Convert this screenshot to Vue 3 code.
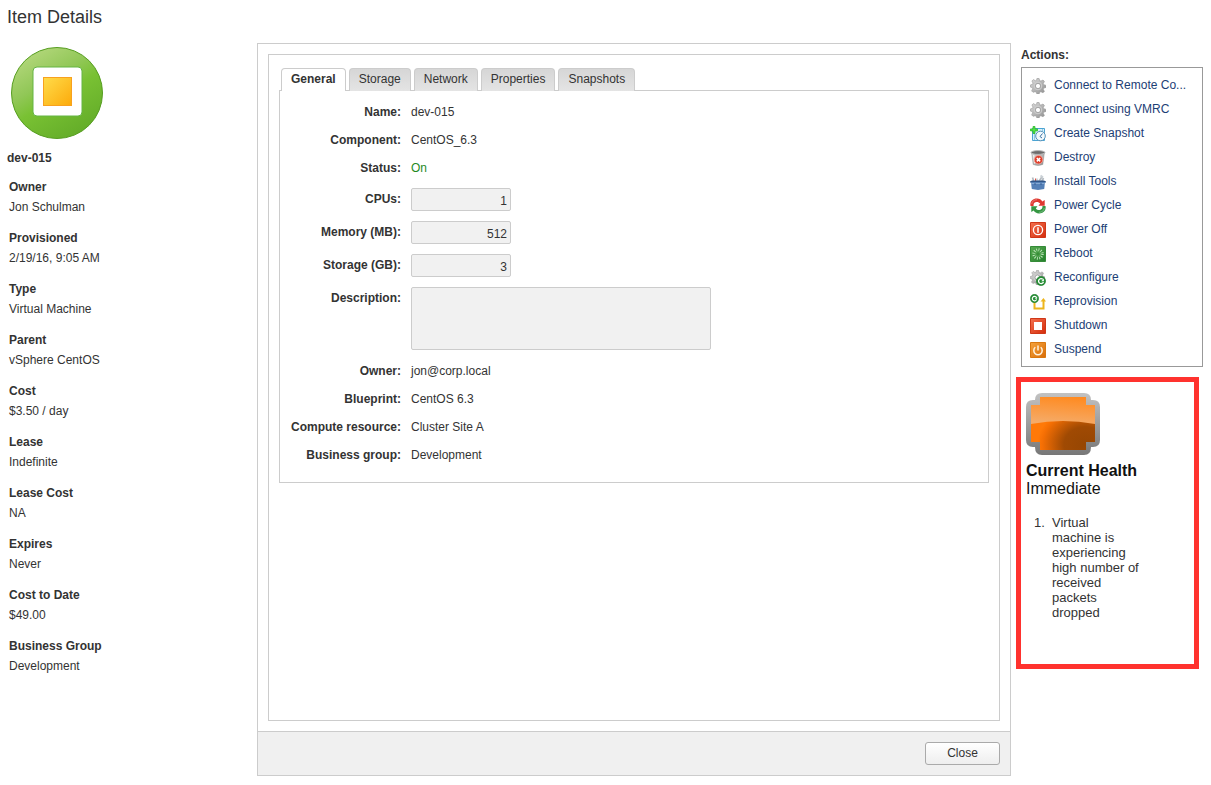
<template>
  <svg class="sprite" aria-hidden="true">
    <defs>
      <linearGradient id="steel" x1="0" y1="0" x2="1" y2="1">
        <stop offset="0" stop-color="#dedede" />
        <stop offset="1" stop-color="#8d8d8d" />
      </linearGradient>
      <linearGradient id="red" x1="0" y1="0" x2="1" y2="1">
        <stop offset="0" stop-color="#f4714f" />
        <stop offset="1" stop-color="#d42c0b" />
      </linearGradient>
      <linearGradient id="green" x1="0" y1="0" x2="1" y2="1">
        <stop offset="0" stop-color="#58aa50" />
        <stop offset="1" stop-color="#237f2c" />
      </linearGradient>
      <linearGradient id="amber" x1="0" y1="0" x2="1" y2="1">
        <stop offset="0" stop-color="#f5a33c" />
        <stop offset="1" stop-color="#d96c08" />
      </linearGradient>
    </defs>

    <symbol id="gear" viewBox="0 0 16 16">
      <path
        d="M7 .3h2l.7 2.3 1.2.5L13 2l1.4 1.4-1.1 2.1.5 1.2 2.2.7v2l-2.2.7-.5 1.2 1.1 2.1-1.4 1.4-2.1-1.1-1.2.5-.7 2.200H7l-.7-2.200-1.200-.5L3 14.300l-1.400-1.400 1.100-2.100-.5-1.200L.3 9V7l2.200-.7.5-1.200L1.900 3l1.400-1.400 2.100 1.100 1.200-.5z"
        fill="url(#steel)"
        stroke="#979797"
        stroke-width="0.6"
      />
      <circle cx="8" cy="8" r="3.8" fill="none" stroke="#cfcfcf" />
      <circle cx="8" cy="8" r="2.6" fill="#fff" stroke="#8d8d8d" stroke-width="0.7" />
    </symbol>

    <symbol id="snapshot" viewBox="0 0 16 16">
      <path d="M2.5 2.5h12v12h-12z" fill="#d9f0fb" stroke="#4ba4d3" />
      <path d="M4.5 3v11M12.5 3v3" stroke="#8fcbe9" />
      <circle cx="10.5" cy="10" r="4.8" fill="#f2f9fd" stroke="#5490b8" />
      <path d="M12.5 7.5l-2.5 3 2 1.5" fill="none" stroke="#3970a2" />
      <path d="M3 .5h2v2.4h2.5v2H5v2.6H3V4.9H.5v-2H3z" fill="#54e048" stroke="#21b523" stroke-width="0.7" />
    </symbol>

    <symbol id="trash" viewBox="0 0 16 16">
      <path d="M1.6 2.5l1.6 12q4.800 2 9.600 0l1.600-12z" fill="url(#steel)" stroke="#929292" stroke-width="0.5" />
      <path d="M3.6 5l1 8.5" stroke="#f1f1f1" stroke-width="1.2" />
      <ellipse cx="8" cy="2.5" rx="6.9" ry="1.9" fill="#6c6c6c" stroke="#b9b9b9" />
      <circle cx="8.5" cy="9.7" r="4.3" fill="#df3f2c" stroke="#f3aaa0" stroke-width="0.8" />
      <path d="M6.8 8l3.4 3.4m0-3.4l-3.4 3.4" stroke="#fff" stroke-width="1.5" />
    </symbol>

    <symbol id="toolbox" viewBox="0 0 16 16">
      <path d="M4 8L2.5 3.5M8.5 8l4-6M11.5 8l2-4" stroke="#b4bac0" stroke-width="1.7" />
      <path d="M10.5 1.5l2.5 2M7 4.5v3" stroke="#cbd1d6" stroke-width="1.8" />
      <path d="M5.5 4.5V8" stroke="#df5245" />
      <path d="M0 7.5l2-1h12l2 1v1H0z" fill="#2f5588" />
      <path d="M1 8h14l-.8 7-6.2 1-6.2-1z" fill="#5480b7" />
      <path d="M1.2 9.5h13.6" stroke="#85a9d3" />
      <path d="M5 9v2m6-2v2" stroke="#345f98" />
    </symbol>

    <symbol id="cycle" viewBox="0 0 16 16">
      <path d="M.5 8C-.5 3.5 3 .3 7 .5c2.5.1 4.3 1.2 5.3 2.9L14.7 2v5.8H8.5l1.7-2.2C9 4.2 7.5 3.7 6 4.1 4 4.6 3.3 6 3.6 8z" fill="#df3830" />
      <path d="M15.5 8c1 4.5-2.5 7.7-6.5 7.5-2.5-.1-4.3-1.2-5.3-2.9L1.3 14V8.2h6.2l-1.7 2.2c1.2 1.4 2.7 1.9 4.2 1.5 2-.5 2.7-1.9 2.4-3.9z" fill="#359743" />
      <path d="M1.7 6Q2.5 1.7 7 1.7M14.3 10Q13.5 14.3 9 14.3" fill="none" stroke="#fff" stroke-opacity="0.3" />
    </symbol>

    <symbol id="off" viewBox="0 0 16 16">
      <path d="M.5.5h15v15H.5z" fill="url(#red)" stroke="#cf3718" />
      <circle cx="8" cy="8" r="4.6" fill="none" stroke="#fff" stroke-width="1.3" />
      <path d="M8 5.2v5.6" stroke="#fff" stroke-width="1.5" />
    </symbol>

    <symbol id="reboot" viewBox="0 0 16 16">
      <path d="M.5.5h15v15H.5z" fill="url(#green)" stroke="#358b38" />
      <circle cx="8" cy="8" r="4.3" fill="none" stroke="#c0e5bc" stroke-width="2.8" stroke-dasharray="0.9 1.35" />
      <circle cx="8" cy="8" r="2.4" fill="#398f39" stroke="#75bd70" stroke-width="0.6" />
    </symbol>

    <symbol id="badge" viewBox="0 0 10 10">
      <circle cx="5" cy="5" r="4.6" fill="#248f34" stroke="#1b7929" stroke-width="0.6" />
      <path d="M6.8 3.3A2.5 2.5 0 1 0 7.4 6" fill="none" stroke="#fff" stroke-width="1.3" />
      <path d="M7.9 2.5v2.7H5.3z" fill="#fff" />
    </symbol>

    <symbol id="reconfigure" viewBox="0 0 16 16">
      <use href="#gear" width="15" height="15" />
      <use href="#badge" x="6" y="6" width="10" height="10" />
    </symbol>

    <symbol id="reprovision" viewBox="0 0 16 16">
      <path d="M4.5 8v6.500h9V7" fill="none" stroke="#edb51c" stroke-width="2" />
      <path d="M10.5 7.5l3-3.5L16 7.5z" fill="#edb51c" />
      <use href="#badge" width="9" height="9" />
    </symbol>

    <symbol id="shutdown" viewBox="0 0 16 16">
      <path d="M.5.5h15v15H.5z" fill="url(#red)" stroke="#cf3718" />
      <path d="M4 4h8v8H4z" fill="#fff" />
    </symbol>

    <symbol id="suspend" viewBox="0 0 16 16">
      <path d="M.5.5h15v15H.5z" fill="url(#amber)" stroke="#d9780f" />
      <path d="M5.3 5.3A4.2 4.2 0 1 0 10.7 5.3" fill="none" stroke="#fff3df" stroke-width="1.5" />
      <path d="M8 3.5v5" stroke="#fff3df" stroke-width="1.5" />
    </symbol>
  </svg>

  <div class="page">
    <h1>Item Details</h1>
    <div class="columns">
      <aside class="summary">
        <svg class="machine" viewBox="0 0 94 94">
          <defs>
            <linearGradient id="disc" x1="0.2" y1="0.05" x2="0.75" y2="0.95">
              <stop offset="0" stop-color="#b3d77b" />
              <stop offset="0.35" stop-color="#91c757" />
              <stop offset="0.55" stop-color="#79c133" />
              <stop offset="1" stop-color="#64ad29" />
            </linearGradient>
            <linearGradient id="core" x1="0" y1="0" x2="1" y2="1">
              <stop offset="0" stop-color="#ffdc4a" />
              <stop offset="1" stop-color="#fcaa0b" />
            </linearGradient>
          </defs>
          <circle cx="47" cy="47" r="45.5" fill="url(#disc)" stroke="#579e22" />
          <rect x="23" y="21" width="49" height="49" rx="4" fill="#fff" stroke="#64b543" />
          <rect x="33.5" y="31.5" width="28" height="28" fill="url(#core)" stroke="#f8a11e" />
        </svg>
        <h2>dev-015</h2>
        <dl>
          <div v-for="item in summary" :key="item.label">
            <dt>{{ item.label }}</dt>
            <dd>{{ item.value }}</dd>
          </div>
        </dl>
      </aside>

      <main class="panel">
        <div class="panel-body">
          <div class="tabs" role="tablist">
            <button
              v-for="tab in tabs"
              :key="tab"
              type="button"
              role="tab"
              :aria-selected="activeTab === tab"
              :class="{ active: activeTab === tab }"
              @click="activeTab = tab"
            >
              {{ tab }}
            </button>
          </div>
          <form class="fields" @submit.prevent>
            <div v-for="field in fields" :key="field.id" class="field">
              <template v-if="field.type">
                <label class="control-label" :for="field.id">{{ field.label }}:</label>
                <div v-if="field.type === 'area'" class="area">
                  <textarea :id="field.id" readonly></textarea>
                </div>
                <input v-else :id="field.id" type="text" :value="field.value" readonly />
              </template>
              <template v-else>
                <strong>{{ field.label }}:</strong>
                <span :class="field.id">{{ field.value }}</span>
              </template>
            </div>
          </form>
        </div>
        <footer>
          <button type="button">Close</button>
        </footer>
      </main>

      <aside class="side">
        <h3>Actions:</h3>
        <ul class="actions">
          <li v-for="action in actions" :key="action.name">
            <a href="#" @click.prevent>
              <svg><use :href="`#${action.icon}`" /></svg>
              <span>{{ action.name }}</span>
            </a>
          </li>
        </ul>

        <section class="health">
          <svg viewBox="0 0 74 64">
            <defs>
              <linearGradient id="rim" x1="0" y1="0" x2="0" y2="1">
                <stop offset="0" stop-color="#c2c2c2" />
                <stop offset="1" stop-color="#777" />
              </linearGradient>
              <radialGradient id="face" cx="0.85" cy="0.9" r="0.75">
                <stop offset="0" stop-color="#964602" />
                <stop offset="0.45" stop-color="#a04a03" />
                <stop offset="0.9" stop-color="#f56f04" />
                <stop offset="1" stop-color="#ff7908" />
              </radialGradient>
              <linearGradient id="gloss" x1="0.7" y1="0" x2="0.5" y2="1">
                <stop offset="0" stop-color="#ff8a20" />
                <stop offset="1" stop-color="#f5ab68" />
              </linearGradient>
            </defs>
            <path
              d="M16 1h42q7 0 7 7h2q7 0 7 7v33q0 7-7 7h-2q0 8-7 8H16q-7 0-7-8H7q-7 0-7-7V15Q0 8 7 8h2q0-7 7-7z"
              fill="url(#rim)"
            />
            <path d="M14 5h46v8h9v37h-9v8H14v-8H5V13h9z" fill="url(#face)" />
            <path d="M14 5h46v8h9v19Q37 26 5 32V13h9z" fill="url(#gloss)" />
          </svg>
          <h4>Current Health</h4>
          <p>Immediate</p>
          <ol>
            <li>Virtual machine is experiencing high number of received packets dropped</li>
          </ol>
        </section>
      </aside>
    </div>
  </div>
</template>

<script setup>
import { ref } from "vue";

const summary = [
  { label: "Owner", value: "Jon Schulman" },
  { label: "Provisioned", value: "2/19/16, 9:05 AM" },
  { label: "Type", value: "Virtual Machine" },
  { label: "Parent", value: "vSphere CentOS" },
  { label: "Cost", value: "$3.50 / day" },
  { label: "Lease", value: "Indefinite" },
  { label: "Lease Cost", value: "NA" },
  { label: "Expires", value: "Never" },
  { label: "Cost to Date", value: "$49.00" },
  { label: "Business Group", value: "Development" },
];

const tabs = ["General", "Storage", "Network", "Properties", "Snapshots"];
const activeTab = ref("General");

const fields = [
  { id: "name", label: "Name", value: "dev-015" },
  { id: "component", label: "Component", value: "CentOS_6.3" },
  { id: "status", label: "Status", value: "On" },
  { id: "cpus", label: "CPUs", value: "1", type: "text" },
  { id: "memory", label: "Memory (MB)", value: "512", type: "text" },
  { id: "storage", label: "Storage (GB)", value: "3", type: "text" },
  { id: "description", label: "Description", value: "", type: "area" },
  { id: "owner", label: "Owner", value: "jon@corp.local" },
  { id: "blueprint", label: "Blueprint", value: "CentOS 6.3" },
  { id: "resource", label: "Compute resource", value: "Cluster Site A" },
  { id: "group", label: "Business group", value: "Development" },
];

const actions = [
  { name: "Connect to Remote Co...", icon: "gear" },
  { name: "Connect using VMRC", icon: "gear" },
  { name: "Create Snapshot", icon: "snapshot" },
  { name: "Destroy", icon: "trash" },
  { name: "Install Tools", icon: "toolbox" },
  { name: "Power Cycle", icon: "cycle" },
  { name: "Power Off", icon: "off" },
  { name: "Reboot", icon: "reboot" },
  { name: "Reconfigure", icon: "reconfigure" },
  { name: "Reprovision", icon: "reprovision" },
  { name: "Shutdown", icon: "shutdown" },
  { name: "Suspend", icon: "suspend" },
];
</script>

<style>
body {
  margin: 0;
  background: #fff;
}
</style>

<style scoped>
.sprite {
  position: absolute;
  width: 0;
  height: 0;
}

.page {
  font-family: "Liberation Sans", Arial, sans-serif;
  font-size: 12px;
  line-height: 16px;
  color: #333;
}

h1,
h2,
h3,
h4,
p,
dl,
dd,
ul,
ol {
  margin: 0;
  padding: 0;
}

h1 {
  padding: 0 7px;
  font-size: 18px;
  font-weight: normal;
  line-height: 34px;
}

.columns {
  display: flex;
  align-items: flex-start;
  padding-top: 9px;
}

.summary {
  width: 250px;
  flex: none;
  padding: 3px 0 0 7px;
}

.machine {
  display: block;
  width: 94px;
  height: 94px;
  margin-left: 3px;
}

h2 {
  margin-top: 10px;
  font-size: 12px;
}

dl {
  display: grid;
  gap: 11px;
  padding: 11px 2px;
  line-height: 20px;
}

dt {
  font-weight: bold;
}

.panel {
  flex: 1;
  min-width: 0;
  border: 1px solid #ccc;
}

.panel-body {
  box-sizing: border-box;
  min-height: calc(100vh - 118px);
  margin: 10px;
  padding: 13px 10px;
  border: 1px solid #ccc;
}

.tabs {
  display: flex;
  gap: 3px;
  padding-left: 2px;
}

.tabs button {
  height: 23px;
  padding: 0 9px 2px;
  border: 1px solid #ccc;
  border-bottom: 0;
  border-radius: 4px 4px 0 0;
  background: linear-gradient(#d6d6d6, #e4e4e4);
  color: #333;
  font: 12px/20px "Liberation Sans", Arial, sans-serif;
}

.tabs button.active {
  position: relative;
  background: #fff;
  font-weight: bold;
}

.fields {
  display: grid;
  gap: 10px;
  margin-top: -1px;
  padding: 13px 0 17px;
  border: 1px solid #ccc;
}

.field {
  display: grid;
  grid-template-columns: 121px 1fr;
  column-gap: 10px;
  align-items: start;
  min-height: 18px;
}

.field strong,
.control-label {
  text-align: right;
  font-weight: bold;
}

.control-label {
  padding-top: 3px;
}

.status {
  color: #1f8a1f;
}

.field input,
.field textarea {
  display: block;
  box-sizing: border-box;
  width: 100px;
  height: 23px;
  margin: 0;
  padding: 2px 3px 0;
  border: 1px solid #ccc;
  border-radius: 2px;
  background: #f1f1f1;
  color: #333;
  font: 12px/16px "Liberation Sans", Arial, sans-serif;
  text-align: right;
}

.area {
  padding-bottom: 3px;
}

.field textarea {
  width: 300px;
  max-width: 100%;
  height: 63px;
  resize: none;
  text-align: left;
}

footer {
  display: flex;
  justify-content: flex-end;
  padding: 10px;
  border-top: 1px solid #ccc;
  background: #f0f0f0;
}

footer button {
  width: 75px;
  height: 23px;
  padding: 0 0 1px;
  border: 1px solid #aaa;
  border-radius: 3px;
  background: linear-gradient(#fff, #eee);
  color: #333;
  font: 12px/20px "Liberation Sans", Arial, sans-serif;
}

.side {
  width: 200px;
  flex: none;
}

h3 {
  padding: 4px 10px;
  font-size: 12px;
}

.actions {
  margin: 0 8px 0 10px;
  padding: 5px 8px;
  border: 1px solid #999;
  list-style: none;
}

.actions a {
  display: flex;
  align-items: center;
  gap: 8px;
  height: 24px;
  color: #1c4075;
  text-decoration: none;
}

.actions svg {
  flex: none;
  width: 16px;
  height: 16px;
  padding-top: 2px;
}

.actions span {
  white-space: nowrap;
}

.health {
  min-height: 271px;
  margin: 10px 12px 0 5px;
  padding: 10px 5px 1px;
  border: 5px solid #ff322e;
  color: #111;
}

.health svg {
  display: block;
  width: 74px;
  height: 64px;
}

.health h4,
.health p {
  font-size: 16px;
  line-height: 18px;
}

.health h4 {
  margin-top: 6px;
}

.health ol {
  max-width: 88px;
  padding: 17px 0 0 26px;
  font-size: 13px;
  line-height: 15px;
  color: #333;
}

.health li::marker {
  content: counter(list-item) ".\00a0\00a0";
}
</style>
